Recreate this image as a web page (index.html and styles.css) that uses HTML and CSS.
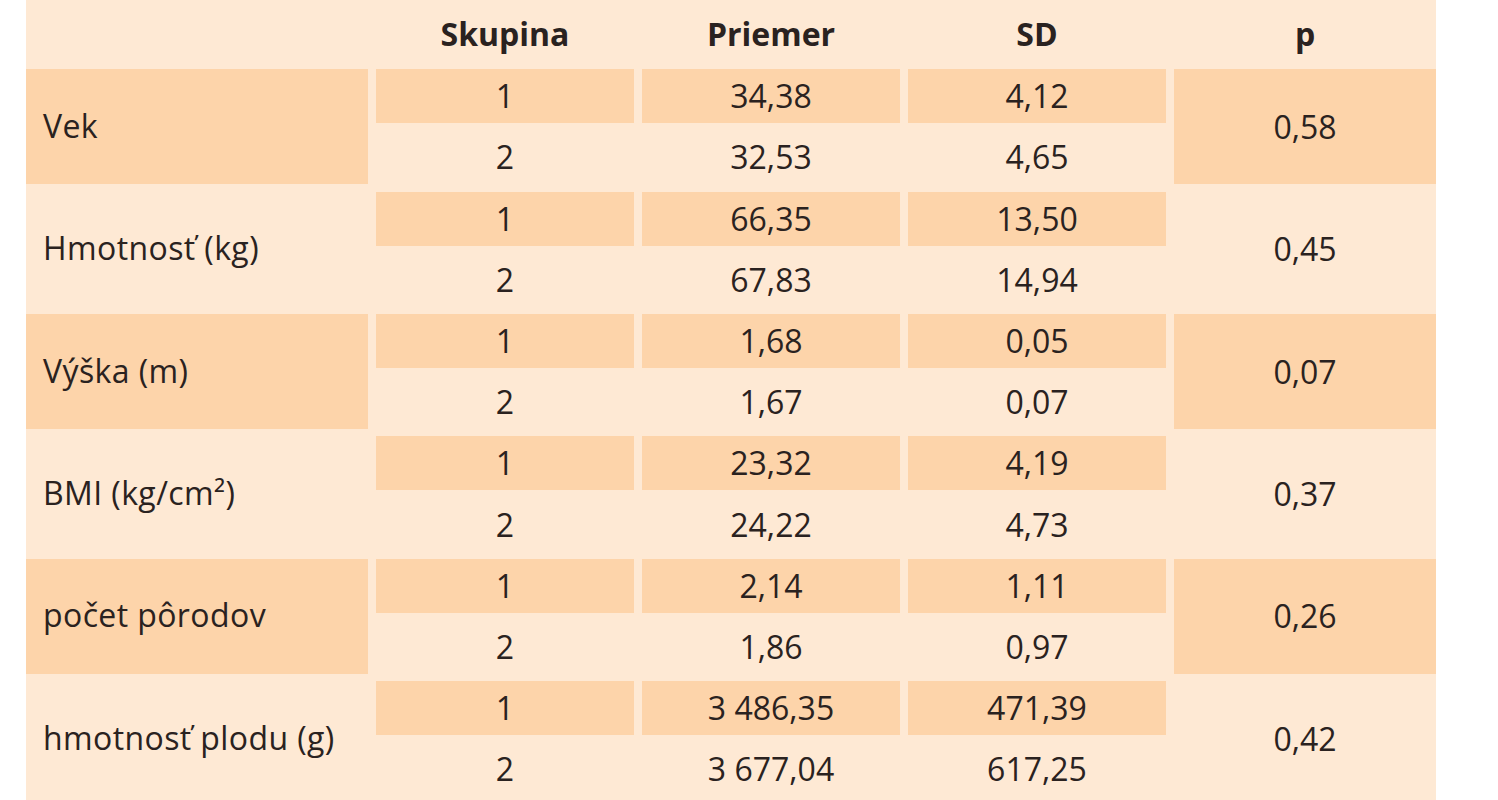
FILE: index.html
```html
<!DOCTYPE html>
<html lang="sk">
<head>
<meta charset="utf-8">
<title>Tabuľka</title>
<link rel="stylesheet" href="styles.css">
</head>
<body>
<div class="table">
  <div class="cell head"></div>
  <div class="cell head c">Skupina</div>
  <div class="cell head c">Priemer</div>
  <div class="cell head c">SD</div>
  <div class="cell head c">p</div>

  <div class="cell label span dark">Vek</div>
  <div class="cell c dark">1</div><div class="cell c dark">34,38</div><div class="cell c dark">4,12</div>
  <div class="cell c span dark">0,58</div>
  <div class="cell c">2</div><div class="cell c">32,53</div><div class="cell c">4,65</div>

  <div class="cell label span">Hmotnosť (kg)</div>
  <div class="cell c dark">1</div><div class="cell c dark">66,35</div><div class="cell c dark">13,50</div>
  <div class="cell c span">0,45</div>
  <div class="cell c">2</div><div class="cell c">67,83</div><div class="cell c">14,94</div>

  <div class="cell label span dark">Výška (m)</div>
  <div class="cell c dark">1</div><div class="cell c dark">1,68</div><div class="cell c dark">0,05</div>
  <div class="cell c span dark">0,07</div>
  <div class="cell c">2</div><div class="cell c">1,67</div><div class="cell c">0,07</div>

  <div class="cell label span">BMI (kg/cm²)</div>
  <div class="cell c dark">1</div><div class="cell c dark">23,32</div><div class="cell c dark">4,19</div>
  <div class="cell c span">0,37</div>
  <div class="cell c">2</div><div class="cell c">24,22</div><div class="cell c">4,73</div>

  <div class="cell label span dark">počet pôrodov</div>
  <div class="cell c dark">1</div><div class="cell c dark">2,14</div><div class="cell c dark">1,11</div>
  <div class="cell c span dark">0,26</div>
  <div class="cell c">2</div><div class="cell c">1,86</div><div class="cell c">0,97</div>

  <div class="cell label span">hmotnosť plodu (g)</div>
  <div class="cell c dark">1</div><div class="cell c dark">3 486,35</div><div class="cell c dark">471,39</div>
  <div class="cell c span">0,42</div>
  <div class="cell c">2</div><div class="cell c">3 677,04</div><div class="cell c">617,25</div>
</div>
</body>
</html>
```

FILE: styles.css
```css
html, body {
  margin: 0;
  padding: 0;
  background: #ffffff;
}

body {
  font-family: "Open Sans", "Noto Sans", sans-serif;
  color: #2a2220;
}

.table {
  margin-left: 26px;
  width: 1410px;
  height: 820px;
  background: #fee9d4;
  display: grid;
  grid-template-columns: 342px 258px 258px 258px 262px;
  grid-template-rows: 62px repeat(12, 54px);
  column-gap: 8px;
  row-gap: 7.2px;
  align-content: start;
}

.cell {
  display: flex;
  align-items: center;
  font-size: 32px;
  line-height: 1;
  white-space: nowrap;
}

.cell.c {
  justify-content: center;
}

.cell.label {
  padding-left: 17px;
  padding-bottom: 2px;
  letter-spacing: 0.4px;
}

.cell.span {
  grid-row: span 2;
}

.cell.dark {
  background: #fdd4aa;
}

.cell.head {
  font-weight: 700;
  align-items: flex-end;
  padding-bottom: 12px;
}
```
